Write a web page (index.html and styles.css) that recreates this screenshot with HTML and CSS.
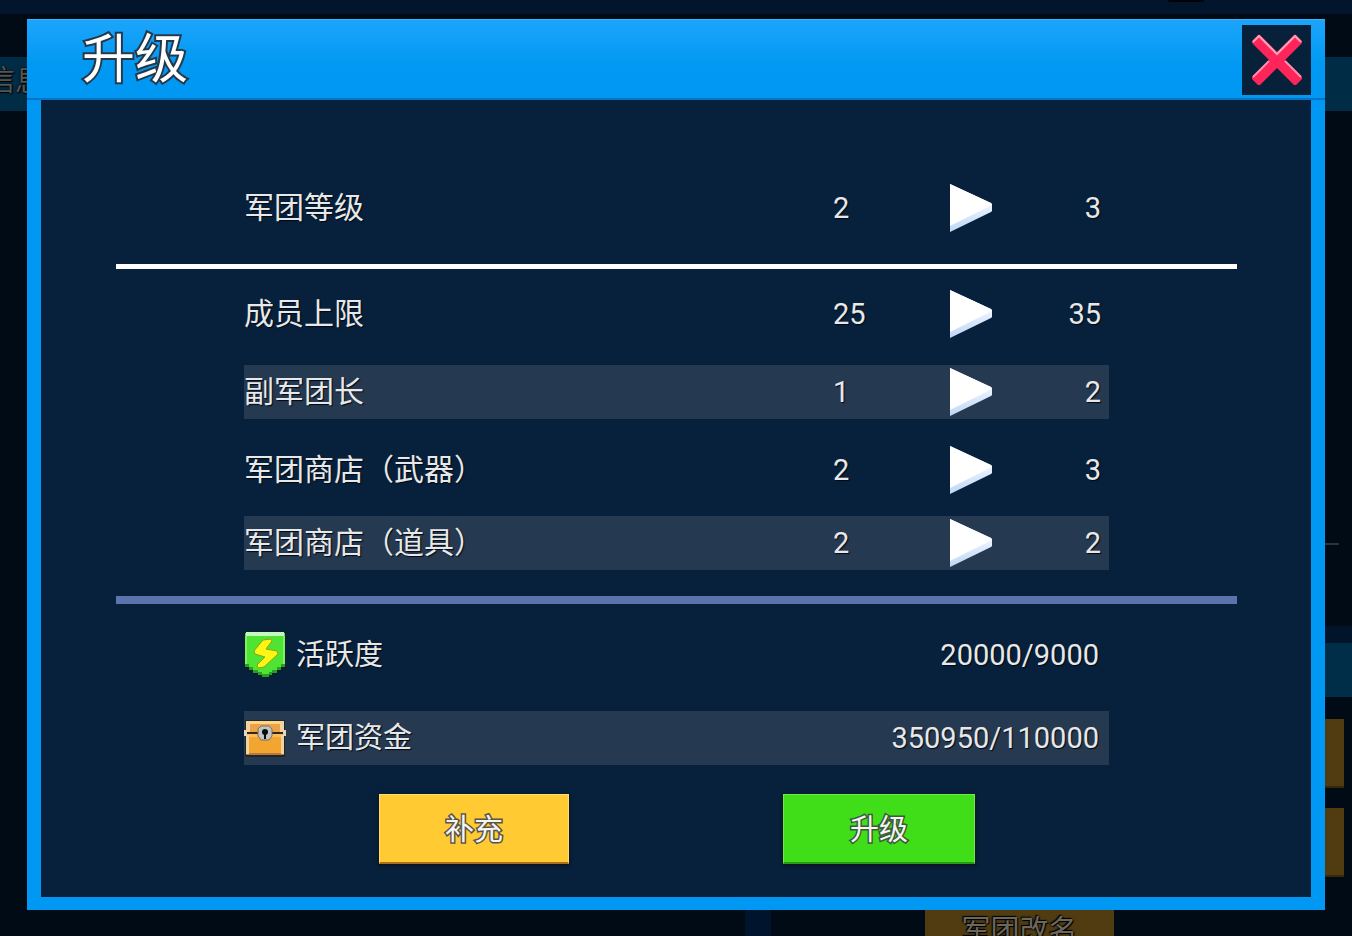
FILE: index.html
```html
<!DOCTYPE html>
<html lang="zh-CN">
<head>
<meta charset="utf-8">
<meta name="viewport" content="width=device-width, initial-scale=1">
<title>升级</title>
<link rel="stylesheet" href="styles.css">
</head>
<body>
<div class="backdrop" aria-hidden="true">
  <div class="bg-top"></div>
  <div class="bg-notch"></div>
  <div class="bg-tab">信息</div>
  <div class="bg-rule"></div>
  <div class="bg-shade"></div>
  <div class="bg-band"></div>
  <div class="bg-button bg-button-upper"></div>
  <div class="bg-button bg-button-lower"></div>
  <div class="bg-post"></div>
  <div class="bg-rename">军团改名</div>
</div>

<svg class="symbols" aria-hidden="true">
  <defs>
    <linearGradient id="arrow-edge" x1="0" y1="0" x2="0" y2="1">
      <stop offset="0.5" stop-color="#e6f0ff"/>
      <stop offset="1" stop-color="#bdd6f5"/>
    </linearGradient>
    <symbol id="arrow" viewBox="0 0 42 48">
      <path d="M0 0 L41 19 L42 20 V27 L41 28 L0 48Z" fill="url(#arrow-edge)"/>
      <path d="M0 0 L41 19 L42 21 L38 23 L0 42Z" fill="#fff"/>
    </symbol>
  </defs>
</svg>

<main class="dialog" role="dialog" aria-labelledby="dialog-title">
  <header class="dialog-header">
    <h1 class="dialog-title" id="dialog-title">升级</h1>
    <button class="close" type="button" aria-label="关闭">
      <svg width="52" height="52" viewBox="0 0 52 52">
        <path d="M7 1 H9 L26 18 L43 1 H45 L51 7 V9 L34 26 L51 43 V45 L45 51 H43 L26 34 L9 51 H7 L1 45 V43 L18 26 L1 9 V7Z" fill="#ff2459"/>
        <path d="M2 8 L8 2 L26 20 L44 2 L50 8" fill="none" stroke="#f7a3b8" stroke-width="2"/>
        <path d="M2 43 L18 27 M34 27 L50 43" fill="none" stroke="#f792ab" stroke-width="2"/>
      </svg>
    </button>
  </header>

  <section class="dialog-body">
    <table class="stats">
      <tbody>
        <tr class="row"><th scope="row">军团等级</th><td>2</td><td><svg class="arrow"><use href="#arrow"/></svg></td><td class="next">3</td></tr>
      </tbody>
    </table>
    <hr class="divider">
    <table class="stats">
      <tbody>
        <tr class="row"><th scope="row">成员上限</th><td>25</td><td><svg class="arrow"><use href="#arrow"/></svg></td><td class="next">35</td></tr>
        <tr class="row striped"><th scope="row">副军团长</th><td>1</td><td><svg class="arrow"><use href="#arrow"/></svg></td><td class="next">2</td></tr>
        <tr class="row"><th scope="row">军团商店（武器）</th><td>2</td><td><svg class="arrow"><use href="#arrow"/></svg></td><td class="next">3</td></tr>
        <tr class="row striped paired"><th scope="row">军团商店（道具）</th><td>2</td><td><svg class="arrow"><use href="#arrow"/></svg></td><td class="next">2</td></tr>
      </tbody>
    </table>
    <hr class="divider divider-blue">
    <table class="stats">
      <tbody>
        <tr class="row cost">
          <th scope="row">
            <svg class="icon" viewBox="0 0 42 48">
              <path d="M2 0H40V2H42V38H38V41H34V44H29V46H25V48H18V46H14V44H9V41H5V38H0V2H2Z" fill="#08202a"/>
              <path d="M1 2H41V33H37V36H33V39H28V41H25V43H18V41H14V39H9V36H5V33H1Z" fill="#4fe334"/>
              <path d="M1 33H5V36H9V39H14V41H18V43H25V41H28V39H33V36H37V33H41V36H37V39H33V42H28V44H25V46H18V44H14V42H9V39H5V36H1Z" fill="#2b9d27"/>
              <path d="M2 1H40V5H2Z" fill="#c5f7c0"/>
              <path d="M1 5H3V33H1ZM39 5H41V33H39Z" fill="#7df068"/>
              <path d="M19 9 L27 8 L28 10 L22 18 L33 20 L34 23 L20 36 L14 37 L13 34 L21 26 L11 23 L10 20Z" fill="#fdf515" stroke="#8aa512" stroke-width="1" stroke-linejoin="round"/>
            </svg>
            活跃度</th>
          <td>20000/9000</td>
        </tr>
        <tr class="row cost striped">
          <th scope="row">
            <svg class="icon" viewBox="0 0 42 48">
              <path d="M1 6H41V43H1Z" fill="#20262c"/>
              <path d="M2 7H40V18H2Z" fill="#eda345"/>
              <path d="M2 7H40V10H2Z" fill="#ffd58a"/>
              <path d="M2 20H40V39H2Z" fill="#f3a62f"/>
              <path d="M2 20H40V23H2Z" fill="#f9bd5b"/>
              <path d="M2 39H40V41H2Z" fill="#b9793a"/>
              <path d="M2 7H6V18H2ZM36 7H40V18H36ZM2 21H5V40H2ZM37 21H40V40H37Z" fill="#f1d3a2"/>
              <path d="M0 18H42V20H0Z" fill="#33251b"/>
              <path d="M0 16H3V22H0ZM39 16H42V22H39Z" fill="#e6d5bd"/>
              <path d="M17 12H25L28 15V22L25 26H17L14 22V15Z" fill="#c4c5c0" stroke="#72716b"/>
              <circle cx="21" cy="18" r="3" fill="#080b0f"/>
              <path d="M20 18H22V25H20Z" fill="#080b0f"/>
            </svg>
            军团资金</th>
          <td>350950/110000</td>
        </tr>
      </tbody>
    </table>
    <div class="actions">
      <button class="action refill" type="button">补充</button>
      <button class="action upgrade" type="button">升级</button>
    </div>
  </section>
</main>
</body>
</html>
```
FILE: styles.css
```css
* {
  box-sizing: border-box;
}

body {
  margin: 0;
  min-height: 100vh;
  padding: 19px 27px 26px;
  display: flex;
  overflow: hidden;
  background: #010b16;
  color: #e8e8e8;
  font-family: Roboto, "Noto Sans CJK SC", sans-serif;
  font-size: 29px;
}

.backdrop {
  position: fixed;
  inset: 0;
  overflow: hidden;
}

.backdrop > div {
  position: absolute;
}

.bg-top {
  top: 0;
  left: 0;
  right: 0;
  height: 14px;
  background: #02152c;
}

.bg-notch {
  top: 0;
  right: 148px;
  width: 36px;
  height: 2px;
  border-radius: 0 0 4px 4px;
  background: #000408;
}

.bg-tab {
  top: 57px;
  left: 0;
  right: 0;
  height: 54px;
  background: #002c46;
  color: #57544f;
  line-height: 48px;
  text-indent: -14px;
  text-shadow: 0 0 2px #000, 1px 1px 1px #000;
}

.bg-rule {
  right: 13px;
  bottom: 391px;
  width: 40px;
  height: 2px;
  background: #2a323a;
}

.bg-shade {
  right: 0;
  bottom: 293px;
  width: 60px;
  height: 17px;
  background: #01142a;
}

.bg-band {
  right: 0;
  bottom: 239px;
  width: 60px;
  height: 54px;
  background: #002d47;
}

.bg-button {
  right: 8px;
  width: 60px;
  height: 69px;
  background: #503c10;
  border-bottom: 2px solid #38270a;
}

.bg-button-upper {
  bottom: 148px;
}

.bg-button-lower {
  bottom: 59px;
}

.bg-post {
  left: 745px;
  bottom: 0;
  width: 26px;
  height: 30px;
  background: #01142e;
}

.bg-rename {
  right: 238px;
  bottom: -30px;
  width: 189px;
  height: 69px;
  background: #503c10;
  color: #6b675f;
  line-height: 68px;
  text-align: center;
  text-shadow: 0 0 2px #000, 1px 1px 1px #000, -1px -1px 1px #000;
}

.symbols {
  position: absolute;
  width: 0;
  height: 0;
}

.dialog {
  position: relative;
  flex: 1;
  display: flex;
  flex-direction: column;
  background: #0098f2;
}

.dialog-header {
  display: flex;
  align-items: center;
  justify-content: space-between;
  height: 81px;
  padding: 1px 14px 0 55px;
  border-top: 1px solid #3ab4ff;
  border-bottom: 2px solid #0573c6;
  background: linear-gradient(#1ca5fb, #0098f2 60%);
}

.dialog-title {
  margin: 0;
  color: #fff;
  font-size: 53px;
  font-weight: 400;
  line-height: 76px;
  -webkit-text-stroke: 4px #23394b;
  paint-order: stroke fill;
}

.close {
  display: flex;
  align-items: center;
  justify-content: center;
  width: 69px;
  height: 70px;
  padding: 0;
  border: 0;
  background: #08213b;
}

.dialog-body {
  flex: 1;
  margin: 0 14px 13px;
  padding: 81px 74px 33px 75px;
  background: #07213c;
}

.stats {
  display: block;
  margin: 0 128px;
}

.stats tbody {
  display: block;
}

.row {
  display: grid;
  grid-template-columns: 1fr 117px 42px 109px;
  align-items: center;
  height: 54px;
  padding-right: 8px;
}

.row + .row {
  margin-top: 24px;
}

.row + .paired {
  margin-top: 19px;
}

.row + .cost {
  margin-top: 29px;
}

.striped {
  background: #253951;
}

.row th,
.row td {
  padding: 0;
  font-weight: 400;
  line-height: 48px;
  text-align: left;
  text-shadow: 1px 1px 1px #000814;
}

.row th {
  font-size: 30px;
}

.row .next {
  text-align: right;
}

.arrow {
  display: block;
  width: 42px;
  height: 48px;
}

.divider {
  height: 5px;
  margin: 29px 0 18px;
  border: 0;
  background: #fff;
}

.divider-blue {
  height: 8px;
  margin: 26px 0 24px;
  background: #5b74ae;
}

.cost {
  grid-template-columns: 1fr auto;
  padding-right: 10px;
}

.cost th {
  display: flex;
  align-items: center;
  gap: 10px;
  font-size: 29px;
}

.icon {
  width: 42px;
  height: 48px;
}

.actions {
  display: flex;
  justify-content: space-between;
  margin: 29px 262px 0 263px;
}

.action {
  width: 190px;
  height: 70px;
  padding: 0 0 4px;
  border: 1px solid #ffdc75;
  border-bottom: 2px solid #a8701a;
  background: #ffca32;
  color: #f4f4f4;
  font-family: inherit;
  font-size: 29px;
  -webkit-text-stroke: 3px #59544a;
  paint-order: stroke fill;
  box-shadow: 0 1px 3px 1px #0a1420;
}

.upgrade {
  width: 192px;
  border-color: #6ce94e;
  border-bottom-color: #279a16;
  background: #40de19;
  -webkit-text-stroke-color: #3b5a38;
}

.cost th,
.row.cost th {
  font-size: 29px;
}
```
